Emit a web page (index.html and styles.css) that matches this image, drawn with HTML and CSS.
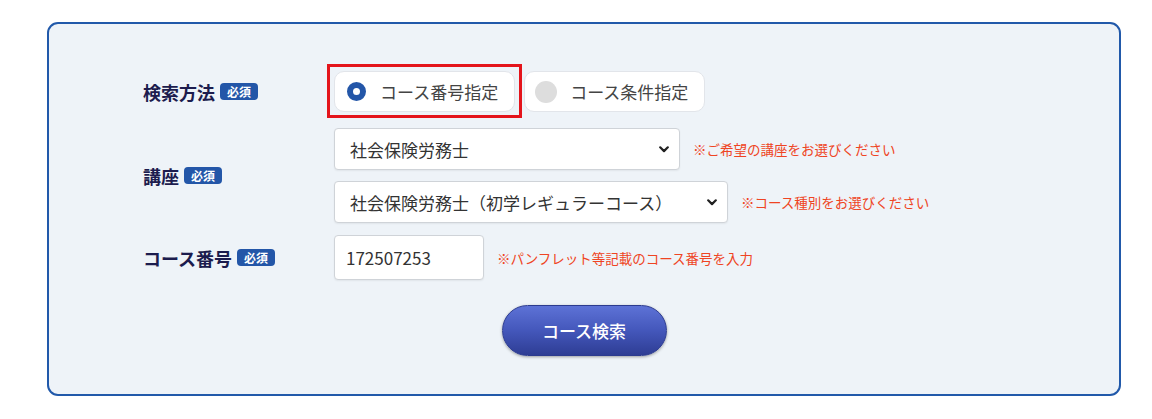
FILE: index.html
```html
<!DOCTYPE html>
<html lang="ja">
<head>
<meta charset="utf-8">
<title>コース検索</title>
<link rel="stylesheet" href="styles.css">
</head>
<body>
<div class="wrap">
  <form class="panel" onsubmit="return false;">
    <div class="row row-method">
      <div class="label">検索方法<span class="badge">必須</span></div>
      <div class="controls radios">
        <label class="radio radio-on">
          <span class="dot-slot"><span class="dot dot-on"></span></span>
          <span class="radio-text">コース番号指定</span>
        </label>
        <label class="radio">
          <span class="dot-slot"><span class="dot dot-off"></span></span>
          <span class="radio-text">コース条件指定</span>
        </label>
      </div>
    </div>

    <div class="row row-course">
      <div class="label">講座<span class="badge">必須</span></div>
      <div class="controls stack">
        <div class="line">
          <select class="select select-1">
            <option>社会保険労務士</option>
          </select>
          <span class="note">※ご希望の講座をお選びください</span>
        </div>
        <div class="line">
          <select class="select select-2">
            <option>社会保険労務士（初学レギュラーコース）</option>
          </select>
          <span class="note">※コース種別をお選びください</span>
        </div>
      </div>
    </div>

    <div class="row row-number">
      <div class="label">コース番号<span class="badge">必須</span></div>
      <div class="controls line">
        <input class="input" type="text" value="172507253">
        <span class="note">※パンフレット等記載のコース番号を入力</span>
      </div>
    </div>

    <div class="actions">
      <button class="search-btn" type="button">コース検索</button>
    </div>
  </form>
</div>
</body>
</html>
```

FILE: styles.css
```css
* { box-sizing: border-box; }

html, body {
  margin: 0;
  padding: 0;
  background: #ffffff;
}

body {
  font-family: "Noto Sans CJK JP", "Noto Sans", sans-serif;
  color: #333333;
}

.wrap {
  padding: 22px 31px 0 47px;
}

.panel {
  display: block;
  height: 374px;
  border: 2px solid #2159aa;
  border-radius: 11px;
  background: #eef3f8;
  padding: 47px 0 0 0;
}

.row {
  display: flex;
  align-items: center;
  padding-left: 94px;
}

.row-course { margin-top: 16px; }
.row-number { margin-top: 12px; }

.label {
  flex: none;
  width: 191px;
  display: flex;
  align-items: center;
  font-size: 18px;
  font-weight: 700;
  color: #1c1c4e;
  line-height: 1;
}

.badge {
  display: inline-block;
  margin-left: 5px;
  padding: 0 7px;
  height: 17px;
  line-height: 17px;
  border-radius: 4px;
  background: #2356a8;
  color: #ffffff;
  font-size: 12px;
  font-weight: 700;
}

.controls {
  display: flex;
}

.radios {
  gap: 9px;
  align-items: center;
}

.radio {
  position: relative;
  display: flex;
  align-items: center;
  height: 41px;
  padding: 0 16px 0 10px;
  background: #ffffff;
  border: 1px solid #e2e5ea;
  border-radius: 10px;
  font-size: 17px;
  color: #444444;
}

.radio-on::after {
  content: "";
  position: absolute;
  left: -8px;
  top: -8px;
  right: -8px;
  bottom: -7px;
  border: 3px solid #e4141b;
  pointer-events: none;
}

.dot-slot {
  width: 22px;
  height: 22px;
  display: flex;
  align-items: center;
  justify-content: center;
  margin-right: 13px;
}

.dot {
  display: block;
  border-radius: 50%;
}

.dot-on {
  width: 19px;
  height: 19px;
  border: 6px solid #2356a8;
  background: #ffffff;
}

.dot-off {
  width: 22px;
  height: 22px;
  background: #dddddd;
}

.radio-text {
  line-height: 1;
}

.stack {
  flex-direction: column;
  gap: 11px;
}

.line {
  display: flex;
  align-items: center;
  gap: 13px;
}

.select {
  -webkit-appearance: none;
  appearance: none;
  height: 42px;
  padding: 0 30px 0 15px;
  border: 1px solid #cfd3d8;
  border-radius: 4px;
  background-color: #ffffff;
  background-image: url("data:image/svg+xml,%3Csvg xmlns='http://www.w3.org/2000/svg' width='10' height='7' viewBox='0 0 10 7'%3E%3Cpath d='M1.2 1.3 L5 5.1 L8.8 1.3' fill='none' stroke='%23222' stroke-width='2.2' stroke-linecap='round' stroke-linejoin='round'/%3E%3C/svg%3E");
  background-repeat: no-repeat;
  background-position: right 10px center;
  background-size: 10px 7px;
  font-family: "Noto Sans CJK JP", "Noto Sans", sans-serif;
  font-size: 17px;
  color: #333333;
  box-shadow: 0 1px 2px rgba(0, 0, 0, 0.06);
}

.select-1 { width: 346px; }
.select-2 { width: 394px; }

.input {
  width: 150px;
  height: 45px;
  padding: 0 11px;
  border: 1px solid #cfd3d8;
  border-radius: 4px;
  background: #ffffff;
  font-family: "Noto Sans CJK JP", "Noto Sans", sans-serif;
  font-size: 17px;
  color: #333333;
  box-shadow: 0 1px 2px rgba(0, 0, 0, 0.06);
}

.note {
  font-size: 13.5px;
  color: #ef4423;
  white-space: nowrap;
}

.actions {
  display: flex;
  justify-content: center;
  margin-top: 25px;
}

.search-btn {
  width: 165px;
  height: 51px;
  border: 1px solid #2c3b8f;
  border-radius: 26px;
  background: linear-gradient(to bottom, #5d72d6 0%, #4457bb 50%, #2e3d94 100%);
  box-shadow: 0 1px 3px rgba(0, 0, 0, 0.35);
  color: #ffffff;
  font-family: "Noto Sans CJK JP", "Noto Sans", sans-serif;
  font-size: 17px;
  font-weight: 500;
  cursor: pointer;
}
```
